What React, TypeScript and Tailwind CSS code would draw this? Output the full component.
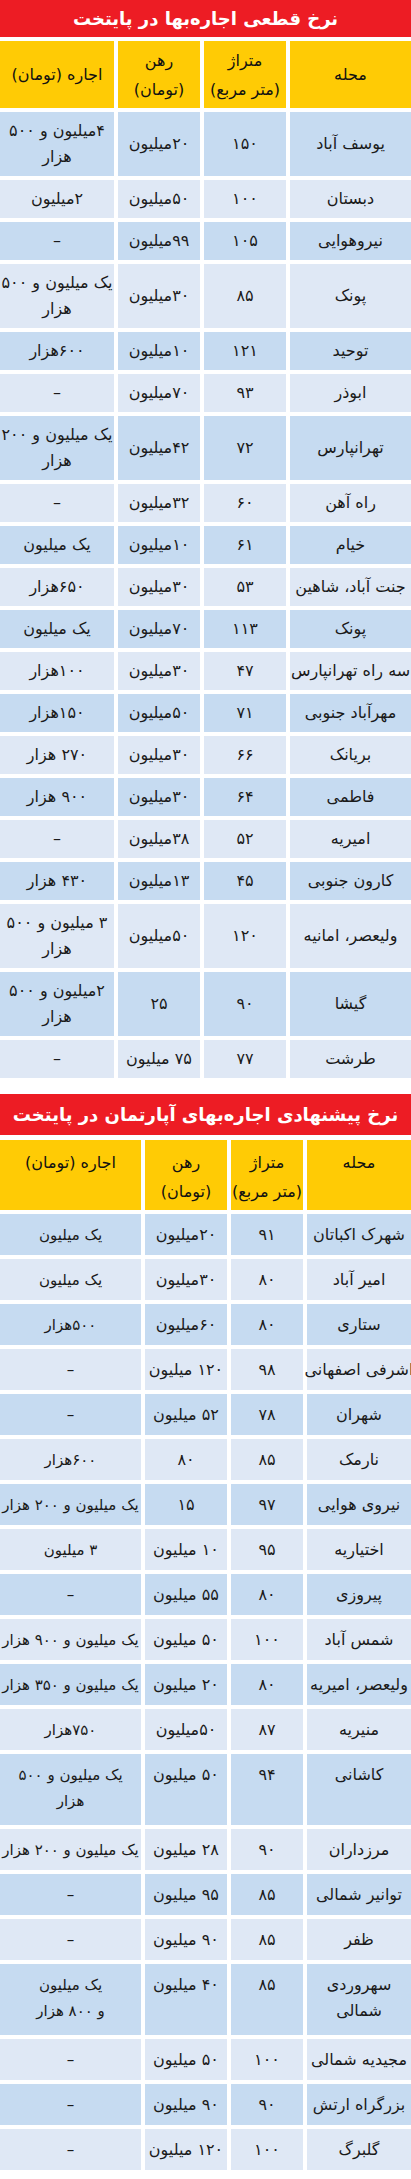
type Row = {
  area: string[];
  size: string;
  deposit: string;
  rent: string[];
  tall?: boolean;
};

const firstRows: Row[] = [
  { area: ["یوسف آباد"], size: "۱۵۰", deposit: "۲۰میلیون", rent: ["۴میلیون و ۵۰۰", "هزار"], tall: true },
  { area: ["دبستان"], size: "۱۰۰", deposit: "۵۰میلیون", rent: ["۲میلیون"] },
  { area: ["نیروهوایی"], size: "۱۰۵", deposit: "۹۹میلیون", rent: ["–"] },
  { area: ["پونک"], size: "۸۵", deposit: "۳۰میلیون", rent: ["یک میلیون و ۵۰۰", "هزار"], tall: true },
  { area: ["توحید"], size: "۱۲۱", deposit: "۱۰میلیون", rent: ["۶۰۰هزار"] },
  { area: ["ابوذر"], size: "۹۳", deposit: "۷۰میلیون", rent: ["–"] },
  { area: ["تهرانپارس"], size: "۷۲", deposit: "۴۲میلیون", rent: ["یک میلیون و ۲۰۰", "هزار"], tall: true },
  { area: ["راه آهن"], size: "۶۰", deposit: "۳۲میلیون", rent: ["–"] },
  { area: ["خیام"], size: "۶۱", deposit: "۱۰میلیون", rent: ["یک میلیون"] },
  { area: ["جنت آباد، شاهین"], size: "۵۳", deposit: "۳۰میلیون", rent: ["۶۵۰هزار"] },
  { area: ["پونک"], size: "۱۱۳", deposit: "۷۰میلیون", rent: ["یک میلیون"] },
  { area: ["سه راه تهرانپارس"], size: "۴۷", deposit: "۳۰میلیون", rent: ["۱۰۰هزار"] },
  { area: ["مهرآباد جنوبی"], size: "۷۱", deposit: "۵۰میلیون", rent: ["۱۵۰هزار"] },
  { area: ["بریانک"], size: "۶۶", deposit: "۳۰میلیون", rent: ["۲۷۰ هزار"] },
  { area: ["فاطمی"], size: "۶۴", deposit: "۳۰میلیون", rent: ["۹۰۰ هزار"] },
  { area: ["امیریه"], size: "۵۲", deposit: "۳۸میلیون", rent: ["–"] },
  { area: ["کارون جنوبی"], size: "۴۵", deposit: "۱۳میلیون", rent: ["۴۳۰ هزار"] },
  { area: ["ولیعصر، امانیه"], size: "۱۲۰", deposit: "۵۰میلیون", rent: ["۳ میلیون و ۵۰۰", "هزار"], tall: true },
  { area: ["گیشا"], size: "۹۰", deposit: "۲۵", rent: ["۲میلیون و ۵۰۰", "هزار"], tall: true },
  { area: ["طرشت"], size: "۷۷", deposit: "۷۵ میلیون", rent: ["–"] },
];

const secondRows: Row[] = [
  { area: ["شهرک اکباتان"], size: "۹۱", deposit: "۲۰میلیون", rent: ["یک میلیون"] },
  { area: ["امیر آباد"], size: "۸۰", deposit: "۳۰میلیون", rent: ["یک میلیون"] },
  { area: ["ستاری"], size: "۸۰", deposit: "۶۰میلیون", rent: ["۵۰۰هزار"] },
  { area: ["اشرفی اصفهانی"], size: "۹۸", deposit: "۱۲۰ میلیون", rent: ["–"] },
  { area: ["شهران"], size: "۷۸", deposit: "۵۲ میلیون", rent: ["–"] },
  { area: ["نارمک"], size: "۸۵", deposit: "۸۰", rent: ["۶۰۰هزار"] },
  { area: ["نیروی هوایی"], size: "۹۷", deposit: "۱۵", rent: ["یک میلیون و ۲۰۰ هزار"] },
  { area: ["اختیاریه"], size: "۹۵", deposit: "۱۰ میلیون", rent: ["۳ میلیون"] },
  { area: ["پیروزی"], size: "۸۰", deposit: "۵۵ میلیون", rent: ["–"] },
  { area: ["شمس آباد"], size: "۱۰۰", deposit: "۵۰ میلیون", rent: ["یک میلیون و ۹۰۰ هزار"] },
  { area: ["ولیعصر، امیریه"], size: "۸۰", deposit: "۲۰ میلیون", rent: ["یک میلیون و ۳۵۰ هزار"] },
  { area: ["منیریه"], size: "۸۷", deposit: "۵۰میلیون", rent: ["۷۵۰هزار"] },
  { area: ["کاشانی"], size: "۹۴", deposit: "۵۰ میلیون", rent: ["یک میلیون و ۵۰۰", "هزار"], tall: true },
  { area: ["مرزداران"], size: "۹۰", deposit: "۲۸ میلیون", rent: ["یک میلیون و ۲۰۰ هزار"] },
  { area: ["توانیر شمالی"], size: "۸۵", deposit: "۹۵ میلیون", rent: ["–"] },
  { area: ["ظفر"], size: "۸۵", deposit: "۹۰ میلیون", rent: ["–"] },
  { area: ["سهروردی", "شمالی"], size: "۸۵", deposit: "۴۰ میلیون", rent: ["یک میلیون", "و ۸۰۰ هزار"], tall: true },
  { area: ["مجیدیه شمالی"], size: "۱۰۰", deposit: "۵۰ میلیون", rent: ["–"] },
  { area: ["بزرگراه ارتش"], size: "۹۰", deposit: "۹۰ میلیون", rent: ["–"] },
  { area: ["گلبرگ"], size: "۱۰۰", deposit: "۱۲۰ میلیون", rent: ["–"] },
];

const headers = [["محله"], ["متراژ", "(متر مربع)"], ["رهن", "(تومان)"], ["اجاره (تومان)"]];

function Lines({ lines }: { lines: string[] }) {
  return (
    <>
      {lines.map((l, i) => (
        <span key={i} className="block whitespace-nowrap">
          {l}
        </span>
      ))}
    </>
  );
}

function RateTable({
  title,
  rows,
  variant,
}: {
  title: string;
  rows: Row[];
  variant: "first" | "second";
}) {
  const first = variant === "first";
  const cols = first
    ? "grid-cols-[121px_82px_82px_1fr]"
    : "grid-cols-[104px_72px_82px_1fr]";
  const cellBox = first ? "justify-center" : "justify-start pt-[8px]";
  const headBox = first ? "justify-center h-[67px]" : "justify-start pt-[8px] h-[70px]";

  return (
    <section>
      <div
        className={`flex items-center justify-center bg-[#ed1c24] text-white font-bold text-[18px] ${
          first ? "h-[37px]" : "h-[41px]"
        }`}
      >
        {title}
      </div>
      <div className={`grid ${cols} gap-[4px] ${first ? "mt-[4px]" : "mt-[5px]"}`}>
        {headers.map((h, i) => (
          <div
            key={i}
            className={`flex flex-col items-center ${headBox} bg-[#ffcb05] text-[16px] leading-[29px] text-center text-[#111]`}
          >
            <Lines lines={h} />
          </div>
        ))}
        {rows.map((r, ri) => {
          const bg = ri % 2 === 0 ? "bg-[#c6dbf1]" : "bg-[#dfe8f5]";
          const h = first
            ? r.tall
              ? "h-[64px]"
              : "h-[38px]"
            : r.tall
              ? "h-[71px]"
              : "h-[41px]";
          const cells = [r.area, [r.size], [r.deposit], r.rent];
          return cells.map((c, ci) => (
            <div
              key={`${ri}-${ci}`}
              className={`flex flex-col items-center ${cellBox} ${bg} ${h} ${
                ci === 3 && !first ? "text-[15px]" : "text-[16px]"
              } leading-[26px] text-center text-[#1a1a1a]`}
            >
              <Lines lines={c} />
            </div>
          ));
        })}
      </div>
    </section>
  );
}

export default function App() {
  return (
    <div
      dir="rtl"
      className="w-[411px] bg-white pb-[9px]"
      style={{ fontFamily: '"DejaVu Sans", "Noto Sans", sans-serif' }}
    >
      <RateTable title="نرخ قطعی اجاره‌بها در پایتخت" rows={firstRows} variant="first" />
      <div className="h-[16px]" />
      <RateTable
        title="نرخ پیشنهادی اجاره‌بهای آپارتمان در پایتخت"
        rows={secondRows}
        variant="second"
      />
    </div>
  );
}
